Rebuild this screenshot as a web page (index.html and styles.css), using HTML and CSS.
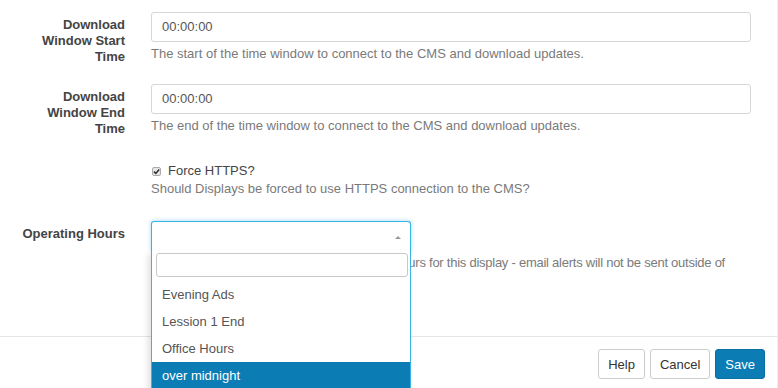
FILE: index.html
```html
<!DOCTYPE html>
<html>
<head>
<meta charset="utf-8">
<link rel="stylesheet" href="styles.css">
</head>
<body>
<div class="modal">
  <div class="modal-body">
    <div class="form-group">
      <label class="control-label">Download Window Start Time</label>
      <div class="controls">
        <div class="form-control">00:00:00</div>
        <p class="help-block">The start of the time window to connect to the CMS and download updates.</p>
      </div>
    </div>
    <div class="form-group">
      <label class="control-label">Download Window End Time</label>
      <div class="controls">
        <div class="form-control">00:00:00</div>
        <p class="help-block">The end of the time window to connect to the CMS and download updates.</p>
      </div>
    </div>
    <div class="form-group group-check">
      <div class="control-label"></div>
      <div class="controls">
        <div class="checkbox">
          <span class="check-box"><svg width="9" height="9" viewBox="0 0 9 9"><path d="M2 4.6 L3.8 6.4 L7.2 2.4" fill="none" stroke="#333" stroke-width="1.6"/></svg></span>
          <span>Force HTTPS?</span>
        </div>
        <p class="help-block help-tight">Should Displays be forced to use HTTPS connection to the CMS?</p>
      </div>
    </div>
    <div class="form-group">
      <label class="control-label">Operating Hours</label>
      <div class="controls select-wrap">
        <div class="select2"><span class="arrow"></span></div>
        <p class="help-block help-narrow">Select the dayparting used as the operating hours for this display - email alerts will not be sent outside of operating hours.</p>
        <div class="dropdown">
          <div class="search-row"><div class="search"></div></div>
          <ul class="options">
            <li>Evening Ads</li>
            <li>Lession 1 End</li>
            <li>Office Hours</li>
            <li class="active">over midnight</li>
          </ul>
        </div>
      </div>
    </div>
  </div>
  <div class="modal-footer">
    <button class="btn">Help</button>
    <button class="btn">Cancel</button>
    <button class="btn btn-primary">Save</button>
  </div>
</div>
</body>
</html>
```

FILE: styles.css
```css
html, body {
  margin: 0;
  padding: 0;
  background: #fff;
  overflow: hidden;
}
body {
  font-family: "Liberation Sans", Arial, sans-serif;
  font-size: 13px;
  color: #555;
}
.modal {
  width: 777px;
  height: 388px;
  border-right: 1px solid #eeeeee;
  overflow: hidden;
}
.modal-body {
  padding: 12px 27px 48px 19px;
}
.form-group {
  display: grid;
  grid-template-columns: 106px 600px;
  column-gap: 26px;
  margin-bottom: 19px;
}
.form-group:last-child {
  margin-bottom: 0;
}
.group-check {
  margin-bottom: 24px;
}
.control-label {
  text-align: right;
  font-weight: bold;
  color: #444;
  padding-top: 5px;
  line-height: 16px;
}
.controls {
  position: relative;
}
.form-control {
  box-sizing: border-box;
  height: 30px;
  border: 1px solid #d6d6d6;
  border-radius: 3px;
  padding: 0 10px;
  line-height: 28px;
  color: #555;
}
.help-block {
  margin: 3px 0 0;
  line-height: 17px;
  color: #7a7a7a;
}
.help-narrow {
  letter-spacing: -0.25px;
}
.help-tight {
  margin-top: 1px;
}
.checkbox {
  display: flex;
  align-items: center;
  gap: 7px;
  padding-top: 6px;
  line-height: 17px;
  color: #444;
  padding-left: 1px;
}
.check-box {
  display: inline-flex;
  width: 9px;
  height: 9px;
  box-sizing: border-box;
  border: 1px solid #aaa;
  border-radius: 2px;
  background: #e6e6e6;
  margin-top: 1px;
}
.check-box svg {
  display: block;
  margin: -1px;
}
.select2 {
  box-sizing: border-box;
  width: 260px;
  height: 30px;
  border: 1px solid #39b3e6;
  border-bottom: none;
  border-radius: 3px 3px 0 0;
  box-shadow: 0 0 4px rgba(80, 180, 235, 0.55);
  position: relative;
  background: #fff;
}
.arrow {
  position: absolute;
  right: 9px;
  top: 14px;
  width: 0;
  height: 0;
  border-left: 3px solid transparent;
  border-right: 3px solid transparent;
  border-bottom: 3px solid #999;
}
.dropdown {
  position: absolute;
  left: 0;
  top: 29px;
  width: 260px;
  box-sizing: border-box;
  border: 1px solid #39b3e6;
  border-top: none;
  background: #fff;
  box-shadow: -3px 4px 6px rgba(0, 0, 0, 0.12);
  z-index: 5;
}
.search-row {
  padding: 3px 2px 4px 4px;
}
.search {
  box-sizing: border-box;
  height: 24px;
  border: 1px solid #c8c8c8;
  border-radius: 3px;
}
.options {
  list-style: none;
  margin: 0;
  padding: 0;
}
.options li {
  height: 27px;
  line-height: 27px;
  padding-left: 10px;
  color: #555;
}
.options li.active {
  background: #0b7db4;
  color: #fff;
}
.modal-footer {
  border-top: 1px solid #e5e5e5;
  display: flex;
  justify-content: flex-end;
  gap: 5px;
  padding: 12px 12px 0 0;
}
.btn {
  font-family: "Liberation Sans", Arial, sans-serif;
  font-size: 13px;
  height: 30px;
  box-sizing: border-box;
  border: 1px solid #ccc;
  border-radius: 3px;
  background: #fff;
  color: #333;
  padding: 0 9px;
}
.btn-primary {
  background: #0b7db4;
  border-color: #0a70a2;
  color: #fff;
}
```
